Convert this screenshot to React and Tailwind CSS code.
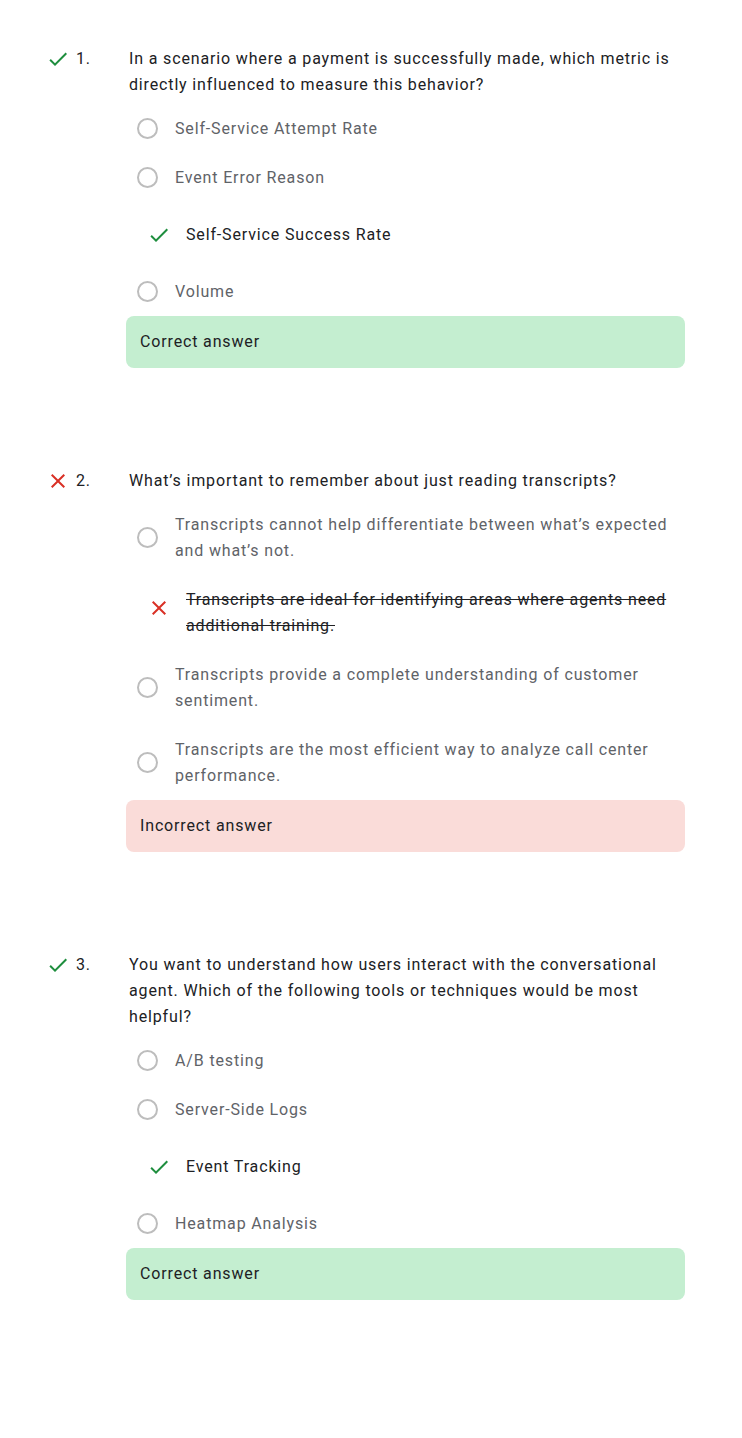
import React from "react";

const CheckIcon = ({ className }) => (
  <svg viewBox="0 0 24 24" width="24" height="24" className={className} fill="currentColor">
    <path d="M9 16.17L4.83 12l-1.42 1.41L9 19 21 7l-1.41-1.41z" />
  </svg>
);

const CloseIcon = ({ className }) => (
  <svg viewBox="0 0 24 24" width="24" height="24" className={className} fill="currentColor">
    <path d="M19 6.41L17.59 5 12 10.59 6.41 5 5 6.41 10.59 12 5 17.59 6.41 19 12 13.41 17.59 19 19 17.59 13.41 12z" />
  </svg>
);

const questions = [
  {
    n: 1,
    correct: true,
    q: "In a scenario where a payment is successfully made, which metric is directly influenced to measure this behavior?",
    options: [
      { t: "Self-Service Attempt Rate" },
      { t: "Event Error Reason" },
      { t: "Self-Service Success Rate", mark: "right" },
      { t: "Volume" },
    ],
  },
  {
    n: 2,
    correct: false,
    q: "What’s important to remember about just reading transcripts?",
    options: [
      { t: "Transcripts cannot help differentiate between what’s expected and what’s not." },
      { t: "Transcripts are ideal for identifying areas where agents need additional training.", mark: "wrong" },
      { t: "Transcripts provide a complete understanding of customer sentiment." },
      { t: "Transcripts are the most efficient way to analyze call center performance." },
    ],
  },
  {
    n: 3,
    correct: true,
    q: "You want to understand how users interact with the conversational agent. Which of the following tools or techniques would be most helpful?",
    options: [
      { t: "A/B testing" },
      { t: "Server-Side Logs" },
      { t: "Event Tracking", mark: "right" },
      { t: "Heatmap Analysis" },
    ],
  },
];

function Option({ o }) {
  if (o.mark) {
    return (
      <div className="flex py-[11.5px]">
        <div className="ml-[18px] h-[42px] flex items-center shrink-0">
          {o.mark === "right" ? (
            <CheckIcon className="text-[#1e8e3e]" />
          ) : (
            <CloseIcon className="text-[#d93025]" />
          )}
        </div>
        <div
          className={
            "ml-[15px] self-center text-[#202124] " + (o.mark === "wrong" ? "line-through" : "")
          }
        >
          {o.t}
        </div>
      </div>
    );
  }
  return (
    <div className="flex items-center py-[11.5px]">
      <div className="ml-[8px] w-[21px] h-[21px] rounded-full border-2 border-[#bdbdbd] shrink-0" />
      <div className="ml-[17px] text-[#5f6368]">{o.t}</div>
    </div>
  );
}

function Question({ q }) {
  return (
    <div className="flex pl-[46px] pr-[57px] mb-[100px]">
      <div className="h-[26px] w-6 flex items-center shrink-0">
        {q.correct ? (
          <CheckIcon className="text-[#1e8e3e]" />
        ) : (
          <CloseIcon className="text-[#d93025]" />
        )}
      </div>
      <div className="ml-[6px] w-[53px] shrink-0 text-[#202124]">{q.n}.</div>
      <div className="flex-1 min-w-0">
        <p className="text-[#202124]">{q.q}</p>
        <div className="mt-[6px]">
          {q.options.map((o, i) => (
            <Option key={i} o={o} />
          ))}
        </div>
        <div
          className={
            "-ml-[3px] rounded-lg px-[14px] py-[13px] text-[#202124] " +
            (q.correct ? "bg-[#c4eed0]" : "bg-[#fadcd9]")
          }
        >
          {q.correct ? "Correct answer" : "Incorrect answer"}
        </div>
      </div>
    </div>
  );
}

export default function App() {
  return (
    <div
      className="w-[742px] min-h-[1438px] bg-white pt-[46px] text-[16px] leading-[26px] tracking-[0.85px]"
      style={{ fontFamily: "Roboto, 'Noto Sans', sans-serif" }}
    >
      {questions.map((q) => (
        <Question key={q.n} q={q} />
      ))}
    </div>
  );
}
